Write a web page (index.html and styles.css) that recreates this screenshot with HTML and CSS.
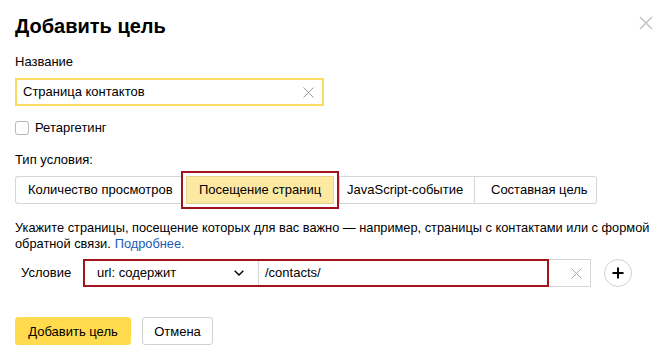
FILE: index.html
```html
<!DOCTYPE html>
<html lang="ru">
<head>
<meta charset="utf-8">
<title>Добавить цель</title>
<link rel="stylesheet" href="styles.css">
</head>
<body>
<div class="dialog">
  <button class="close" aria-label="Закрыть">
    <svg width="14" height="14" viewBox="0 0 14 14"><path d="M1 1L13 13M13 1L1 13" stroke="#c4c4c4" stroke-width="1.6" fill="none"/></svg>
  </button>
  <h1 class="title">Добавить цель</h1>
  <div class="label">Название</div>
  <div class="name-input">
    <span class="name-text">Страница контактов</span>
    <svg class="clear" width="11" height="11" viewBox="0 0 11 11"><path d="M0.5 0.5L10.5 10.5M10.5 0.5L0.5 10.5" stroke="#999" stroke-width="1" fill="none"/></svg>
  </div>
  <label class="check-row">
    <span class="checkbox"></span>
    <span>Ретаргетинг</span>
  </label>
  <div class="label type-label">Тип условия:</div>
  <div class="seg">
    <span class="seg-btn first">Количество просмотров</span>
    <span class="hl"><span class="seg-btn selected">Посещение страниц</span></span>
    <span class="seg-btn">JavaScript-событие</span>
    <span class="seg-btn last">Составная цель</span>
  </div>
  <p class="hint">Укажите страницы, посещение которых для вас важно — например, страницы с контактами или с формой обратной связи.<a href="#">Подробнее.</a></p>
  <div class="cond-row">
    <span class="cond-label">Условие</span>
    <div class="cond-group">
      <div class="select">
        <span>url: содержит</span>
        <svg width="10" height="6" viewBox="0 0 10 6"><path d="M0.7 0.7L5 5L9.3 0.7" stroke="#000" stroke-width="1.4" fill="none"/></svg>
      </div>
      <div class="cond-input">
        <span>/contacts/</span>
        <svg width="11" height="11" viewBox="0 0 11 11"><path d="M0.5 0.5L10.5 10.5M10.5 0.5L0.5 10.5" stroke="#aaa" stroke-width="1" fill="none"/></svg>
      </div>
      <span class="annot"></span>
    </div>
    <span class="plus">
      <svg width="12" height="12" viewBox="0 0 12 12"><path d="M6 0.5V11.5M0.5 6H11.5" stroke="#000" stroke-width="2" fill="none"/></svg>
    </span>
  </div>
  <div class="actions">
    <button class="btn primary">Добавить цель</button>
    <button class="btn">Отмена</button>
  </div>
</div>
</body>
</html>
```
FILE: styles.css
```css
html, body {
  margin: 0;
  padding: 0;
  background: #fff;
}
body {
  font-family: "Liberation Sans", Arial, sans-serif;
  font-size: 13px;
  line-height: 16px;
  color: #000;
}
.dialog {
  position: relative;
  width: 669px;
  height: 356px;
  box-sizing: border-box;
  padding: 13px 14px 0 15px;
}
.close {
  position: absolute;
  top: 16px;
  left: 639px;
  padding: 0;
  border: 0;
  background: none;
  width: 14px;
  height: 14px;
  display: block;
}
.close svg { display: block; }
.title {
  margin: 0;
  font-size: 20px;
  line-height: 26px;
  font-weight: bold;
}
.label {
  margin-top: 15px;
}
.name-input {
  margin-top: 8px;
  width: 309px;
  height: 28px;
  box-sizing: border-box;
  border: 2px solid #fadc62;
  display: flex;
  align-items: center;
  padding: 0 8px 0 6px;
  justify-content: space-between;
}
.name-input .clear { display: block; }
.check-row {
  margin-top: 14px;
  display: flex;
  align-items: center;
  gap: 6px;
  height: 16px;
}
.checkbox {
  width: 14px;
  height: 14px;
  box-sizing: border-box;
  border: 1px solid #b8b8b8;
  border-radius: 3px;
  display: block;
}
.type-label {
  margin-top: 16px;
}
.seg {
  margin-top: 3px;
  display: flex;
  align-items: center;
  height: 38px;
}
.seg-btn {
  height: 28px;
  box-sizing: border-box;
  border: 1px solid #d6d6d6;
  display: flex;
  align-items: center;
  padding: 0 12px;
  white-space: nowrap;
}
.seg-btn.first {
  border-radius: 3px 0 0 3px;
  border-right: 0;
  width: 166px;
}
.seg-btn.last {
  border-radius: 0 3px 3px 0;
  border-left: 0;
  padding: 0 13px 0 16px;
  width: 122px;
}
.hl {
  border: 2px solid #a2131d;
  padding: 3px;
  height: 38px;
  box-sizing: border-box;
  display: flex;
}
.seg-btn.selected {
  background: #fee9a3;
  border-color: #e6d48e;
  width: 148px;
  padding: 0 12px;
}
.hl + .seg-btn {
  width: 136px;
  padding-left: 7px;
}
.hint {
  margin: 11px 0 0;
  width: 645px;
  font-size: 12.8px;
}
.hint a {
  color: #1a5bb8;
  text-decoration: none;
  margin-left: 4px;
}
.cond-row {
  margin-top: 7px;
  display: flex;
  align-items: center;
  padding-left: 6px;
}
.cond-label {
  width: 62px;
}
.cond-group {
  position: relative;
  display: flex;
  height: 28px;
  box-sizing: border-box;
  border: 1px solid #d6d6d6;
}
.select {
  width: 175px;
  box-sizing: border-box;
  border-right: 1px solid #d6d6d6;
  display: flex;
  align-items: center;
  justify-content: space-between;
  padding: 0 14px 0 13px;
}
.select svg, .cond-input svg { display: block; }
.cond-input {
  width: 331px;
  box-sizing: border-box;
  display: flex;
  align-items: center;
  justify-content: space-between;
  padding: 0 8px 0 6px;
}
.annot {
  position: absolute;
  left: -1px;
  top: -1px;
  width: 466px;
  height: 28px;
  box-sizing: border-box;
  border: 2px solid #a2131d;
}
.plus {
  margin-left: 13px;
  width: 28px;
  height: 28px;
  box-sizing: border-box;
  border: 1px solid #cfcfcf;
  border-radius: 50%;
  display: flex;
  align-items: center;
  justify-content: center;
}
.plus svg { display: block; }
.actions {
  margin-top: 30px;
  display: flex;
  gap: 11px;
}
.btn {
  height: 28px;
  box-sizing: border-box;
  border: 1px solid #d0d0d0;
  border-radius: 3px;
  background: #fff;
  font-family: "Liberation Sans", Arial, sans-serif;
  font-size: 13px;
  color: #000;
  padding: 0;
  width: 71px;
  white-space: nowrap;
}
.btn.primary {
  background: #ffdb4d;
  border-color: #ffdb4d;
  width: 116px;
}
```
